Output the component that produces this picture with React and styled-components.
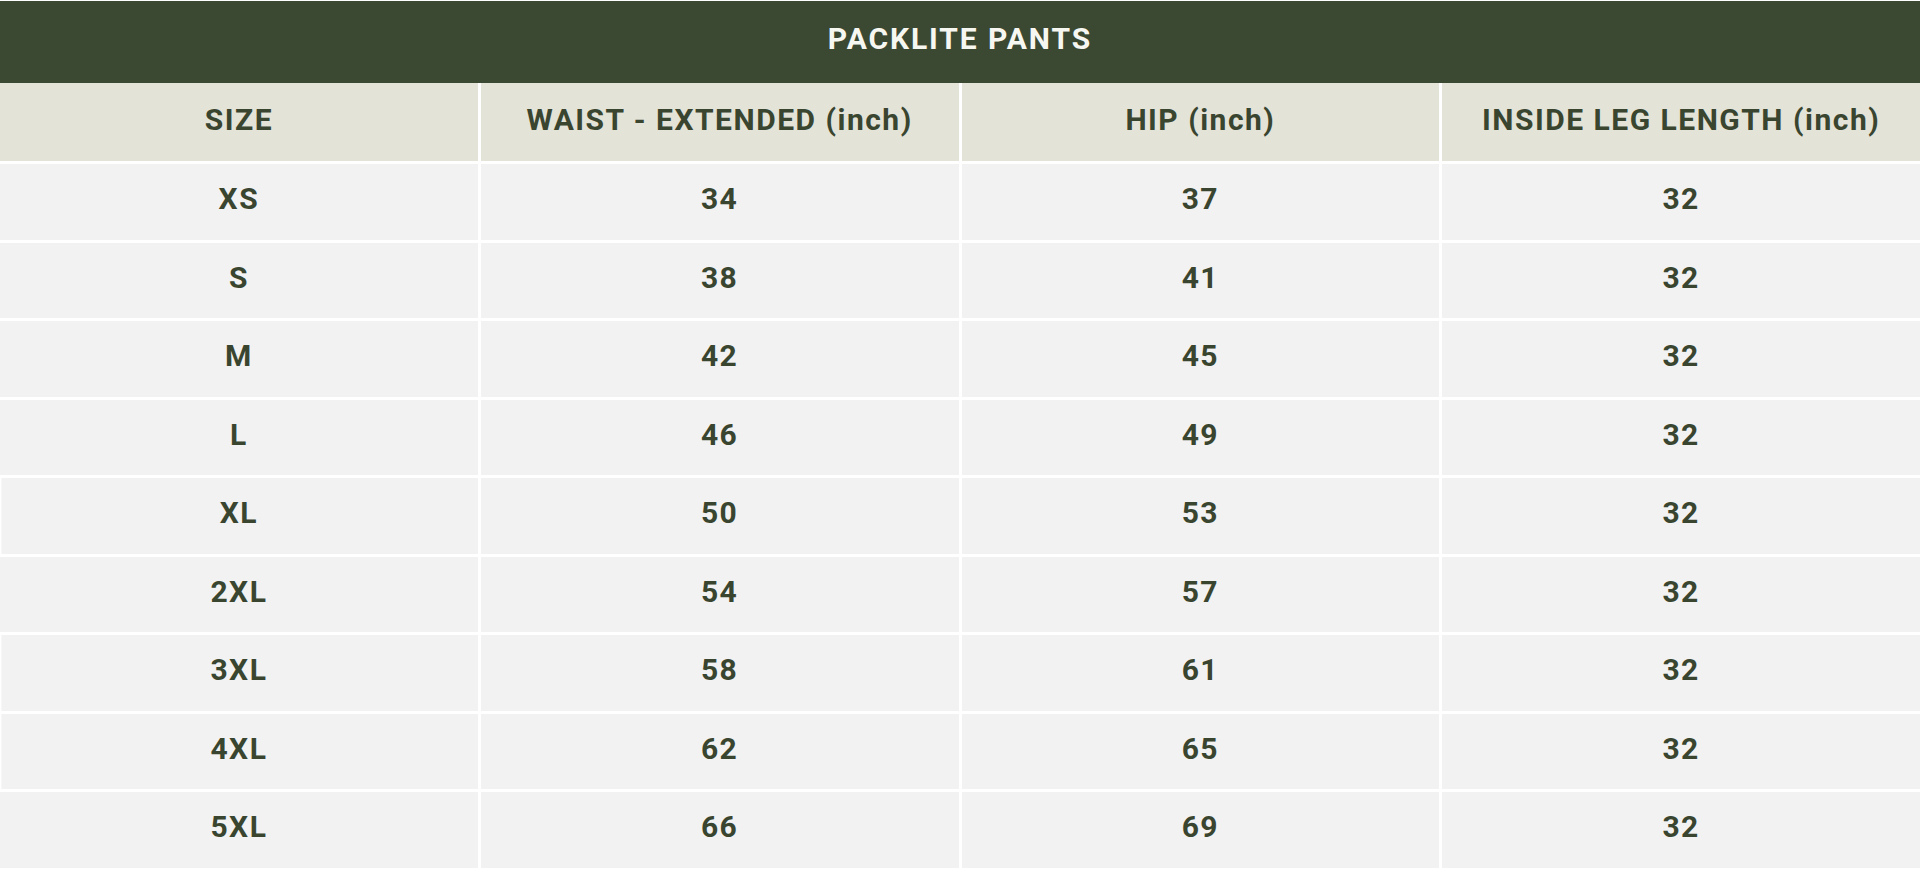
import React from "react";
import styled, { createGlobalStyle, css } from "styled-components";

const GlobalStyle = createGlobalStyle`
  html, body {
    margin: 0;
    padding: 0;
    background: #ffffff;
  }
  body {
    font-family: Roboto, "Liberation Sans", Arial, sans-serif;
  }
`;

const Sheet = styled.div`
  width: 1920px;
  padding-top: 1px;
  background: #ffffff;
`;

const TitleBar = styled.div`
  height: 82px;
  box-sizing: border-box;
  padding-bottom: 8px;
  background: #3c4932;
  display: flex;
  align-items: center;
  justify-content: center;
  color: #f7f7f2;
  font-family: Roboto, "Liberation Sans", Arial, sans-serif;
  font-weight: 700;
  font-size: 30px;
  letter-spacing: 1.9px;
`;

const Table = styled.div`
  display: grid;
  grid-template-columns: repeat(4, 1fr);
  column-gap: 3px;
  row-gap: 3px;
`;

const Cell = styled.div`
  box-sizing: border-box;
  display: flex;
  align-items: center;
  justify-content: center;
  padding-bottom: 6px;
  font-family: Roboto, "Liberation Sans", Arial, sans-serif;
  font-weight: 700;
  font-size: 30px;
  letter-spacing: 1.5px;
  color: #3a4530;
  white-space: nowrap;
  ${(p) =>
    p.$head
      ? css`
          height: 78px;
          background: #e3e3d8;
          padding-bottom: 5px;
        `
      : css`
          height: 75.5px;
          background: #f2f2f2;
        `}
  ${(p) =>
    p.$inset &&
    css`
      box-shadow: inset 1px 0 0 #ffffff, inset 2px 0 0 #f7f7f7;
    `}
`;

const headers = ["SIZE", "WAIST - EXTENDED (inch)", "HIP (inch)", "INSIDE LEG LENGTH (inch)"];

const rows = [
  ["XS", "34", "37", "32"],
  ["S", "38", "41", "32"],
  ["M", "42", "45", "32"],
  ["L", "46", "49", "32"],
  ["XL", "50", "53", "32", true],
  ["2XL", "54", "57", "32"],
  ["3XL", "58", "61", "32", true],
  ["4XL", "62", "65", "32", true],
  ["5XL", "66", "69", "32"],
];

export default function App() {
  return (
    <>
      <GlobalStyle />
      <Sheet>
        <TitleBar>PACKLITE PANTS</TitleBar>
        <Table>
          {headers.map((h) => (
            <Cell key={h} $head>
              {h}
            </Cell>
          ))}
          {rows.map((r) =>
            r.slice(0, 4).map((v, i) => (
              <Cell key={r[0] + "-" + i} $inset={i === 0 && r[4]}>
                {v}
              </Cell>
            ))
          )}
        </Table>
      </Sheet>
    </>
  );
}
